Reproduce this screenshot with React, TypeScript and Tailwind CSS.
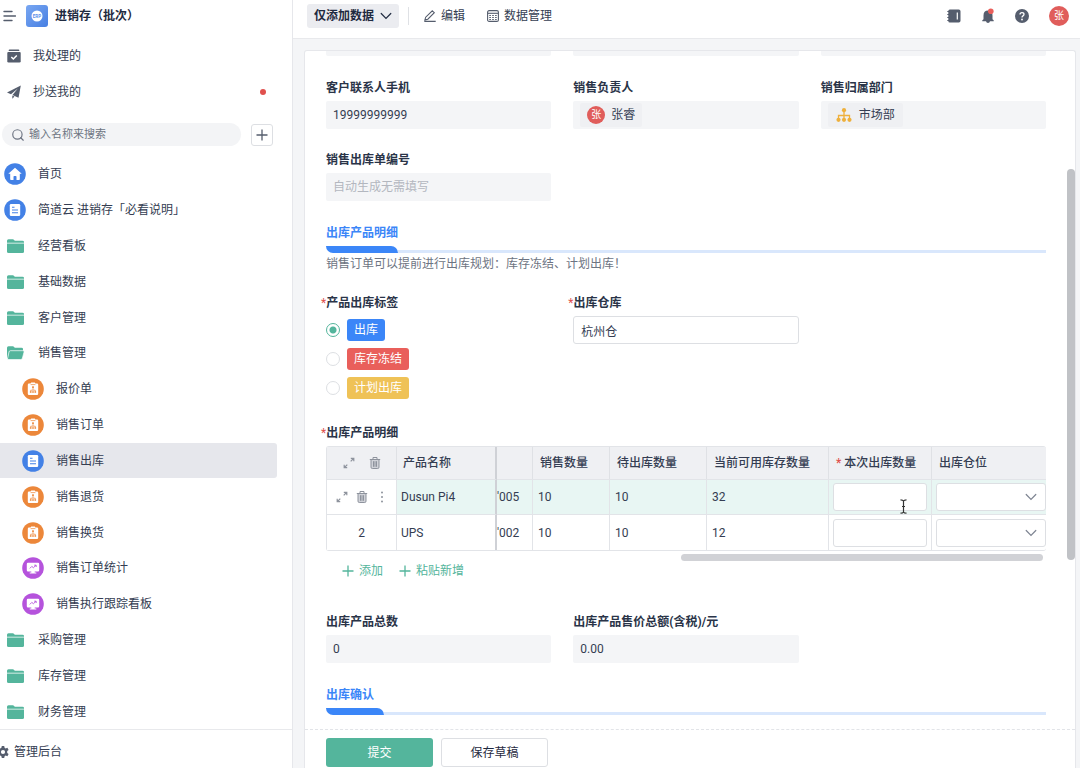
import { useState } from "react";
import type { ReactNode } from "react";
import { Search } from "lucide-react";

type IconKind = "home" | "doc" | "folder" | "folderOpen" | "form" | "board";

type NavItem = {
  label: string;
  icon: IconKind;
  child?: boolean;
};

const navItems: NavItem[] = [
  { label: "首页", icon: "home" },
  { label: "简道云 进销存「必看说明」", icon: "doc" },
  { label: "经营看板", icon: "folder" },
  { label: "基础数据", icon: "folder" },
  { label: "客户管理", icon: "folder" },
  { label: "销售管理", icon: "folderOpen" },
  { label: "报价单", icon: "form", child: true },
  { label: "销售订单", icon: "form", child: true },
  { label: "销售出库", icon: "doc", child: true },
  { label: "销售退货", icon: "form", child: true },
  { label: "销售换货", icon: "form", child: true },
  { label: "销售订单统计", icon: "board", child: true },
  { label: "销售执行跟踪看板", icon: "board", child: true },
  { label: "采购管理", icon: "folder" },
  { label: "库存管理", icon: "folder" },
  { label: "财务管理", icon: "folder" },
];

const tags = [
  { label: "出库", color: "bg-[#3b86f8]" },
  { label: "库存冻结", color: "bg-[#e95f5b]" },
  { label: "计划出库", color: "bg-[#efc257]" },
];

const rows = [
  { name: "Dusun Pi4", code: "'005", sold: 10, pending: 10, stock: 32 },
  { name: "UPS", code: "'002", sold: 10, pending: 10, stock: 12 },
];

function NavIcon({ kind }: { kind: IconKind }) {
  if (kind === "folder") {
    return (
      <svg width="22" height="22" viewBox="0 0 22 22" fill="#54b59c">
        <path d="M3 5.800q0-1.500 1.500-1.500h4.300q.8 0 1.300.6l.7.800h7.700q1.500 0 1.500 1.400v.6H3z" />
        <path d="M3 8.500h17v8q0 1.600-1.500 1.600h-14Q3 18.100 3 16.500z" />
      </svg>
    );
  }
  if (kind === "folderOpen") {
    return (
      <svg width="22" height="22" viewBox="0 0 22 22">
        <path d="M3 5.800q0-1.500 1.500-1.500h4.300q.8 0 1.300.6l.7.800h6.700q1.500 0 1.500 1.400v2H6.500L3.600 16H3z" fill="#54b59c" />
        <path d="M6.400 8.700h12.800q1.200 0 .9 1.200l-1.700 6.300q-.4 1.400-1.800 1.400H4.800q-1.600 0-1.200-1.300l1.400-6.400q.3-1.200 1.400-1.200z" fill="#54b59c" stroke="#fff" strokeWidth=".7" />
      </svg>
    );
  }
  if (kind === "home") {
    return (
      <svg width="22" height="22" viewBox="0 0 22 22">
        <circle cx="11" cy="11" r="10.800" fill="#4381e6" />
        <path d="M11 4.800l6.700 6h-1.900v5.400q0 .8-.8.8h-2.500v-3.200q0-.8-.8-.8h-1.400q-.8 0-.8.8V17H7q-.8 0-.8-.8v-5.400H4.300z" fill="#fff" />
      </svg>
    );
  }
  if (kind === "doc") {
    return (
      <svg width="22" height="22" viewBox="0 0 22 22">
        <circle cx="11" cy="11" r="10.800" fill="#4381e6" />
        <rect x="5.800" y="5" width="10.400" height="12" rx="1.200" fill="#fff" />
        <path d="M8 8.300h2.500M8 11h6M8 13.700h6" stroke="#4381e6" strokeWidth="1.100" />
      </svg>
    );
  }
  if (kind === "form") {
    return (
      <svg width="22" height="22" viewBox="0 0 22 22">
        <circle cx="11" cy="11" r="10.800" fill="#ec873a" />
        <path d="M7 5.500h1.600l.6-.9h3.600l.6.900H15q1.200 0 1.200 1.200v9.100q0 1.200-1.200 1.200H7q-1.200 0-1.200-1.200V6.700Q5.800 5.500 7 5.500z" fill="#fff" />
        <path d="M8.600 6.600h4.800M11 9v3M8.700 13.600v-1.400h4.600v1.400" fill="none" stroke="#ec873a" strokeWidth=".7" />
        <path d="M10.200 8.300h1.600v1.600h-1.600zM7.900 13.200h1.600v1.500H7.900zM10.200 13.200h1.600v1.500h-1.600zM12.500 13.200h1.600v1.500h-1.600z" fill="#ec873a" />
      </svg>
    );
  }
  return (
    <svg width="22" height="22" viewBox="0 0 22 22">
      <circle cx="11" cy="11" r="10.800" fill="#b553dc" />
      <path d="M6 5.800h10q1.200 0 1.200 1.200v6.200q0 1.200-1.200 1.200h-3.300v1h1.600v1.200H7.700v-1.200h1.600v-1H6q-1.200 0-1.200-1.200V7Q4.800 5.800 6 5.800z" fill="#fff" />
      <path d="M7.800 11.400l2-2 1.600 1.300L14 8.300M12.200 8.200h2v1.800" fill="none" stroke="#b553dc" strokeWidth=".9" />
    </svg>
  );
}

function ChevronIcon({ className = "" }: { className?: string }) {
  return (
    <svg width="12" height="8" viewBox="0 0 12 8" fill="none" stroke="currentColor" strokeWidth="1.200" strokeLinecap="round" className={className}>
      <path d="M1.200 1.500L6 6.300l4.800-4.800" />
    </svg>
  );
}

function PlusIcon() {
  return (
    <svg width="12" height="12" viewBox="0 0 12 12" stroke="currentColor" strokeWidth="1.300">
      <path d="M.5 6h11M6 .5v11" />
    </svg>
  );
}

function ExpandIcon() {
  return (
    <svg width="12" height="12" viewBox="0 0 12 12" fill="none" stroke="#8e939d" strokeWidth="1.200">
      <path d="M7.800 1.300h3v3M10.500 1.500L7.700 4.300M1.500 10.500l2.800-2.800M4.200 10.700h-3v-3" />
    </svg>
  );
}

function TrashIcon() {
  return (
    <svg width="12" height="14" viewBox="0 0 12 14" fill="none" stroke="#8e939d" strokeWidth="1">
      <path d="M2 3.500h8v7.700q0 1.300-1.300 1.300H3.300Q2 12.500 2 11.200z" fill="#d0d2d8" />
      <path d="M.8 3.500h10.400M4 3.300V1.500h4v1.800M4.500 5.200v5.600M6 5.200v5.600M7.500 5.200v5.600" />
    </svg>
  );
}

function Sidebar() {
  const [active, setActive] = useState("销售出库");

  return (
    <aside className="flex w-[293px] shrink-0 flex-col border-r border-[#e6e7eb] bg-white text-[#343d52]">
      <div className="flex h-8 items-center gap-[10px] pl-[3px]">
        <button aria-label="菜单" className="text-[#555d6d]">
          <svg width="13" height="12" viewBox="0 0 13 12" stroke="currentColor" strokeWidth="1.400" strokeLinecap="round">
            <path d="M1 1.500h8M1 6h11.500M1 10.500h8" />
          </svg>
        </button>
        <div className="flex items-center gap-[7px]">
          <svg width="22" height="22" viewBox="0 0 22 22" aria-hidden="true">
            <defs>
              <linearGradient id="logo" x1="0" y1="0" x2="1" y2="1">
                <stop offset="0" stopColor="#79a7f2" />
                <stop offset="1" stopColor="#477fe2" />
              </linearGradient>
            </defs>
            <rect width="22" height="22" rx="3" fill="url(#logo)" />
            <circle cx="11" cy="11" r="5.500" fill="#fff" />
            <text x="11" y="12.800" fontSize="4.500" fontWeight="700" textAnchor="middle" fill="#5c90ea">ERP</text>
          </svg>
          <h1 className="text-xs font-bold text-[#1f2a40]">进销存（批次）</h1>
        </div>
      </div>

      <div className="mt-[6px] pr-[26px]">
        <a href="#todo" className="flex h-9 items-center gap-3 pl-[7px]">
          <svg width="14" height="14" viewBox="0 0 14 14">
            <path d="M2.500.5h9q.8 0 .8 1v.6H1.700v-.6q0-1 .8-1z" fill="#555d6d" />
            <path d="M1.300 3h11.400q1 0 1 1v8.200q0 1.300-1.300 1.300H1.600Q.3 13.500.3 12.200V4q0-1 1-1z" fill="#555d6d" />
            <path d="M4.300 8l2 2 3.500-3.600" fill="none" stroke="#fff" strokeWidth="1.500" />
          </svg>
          <span className="text-xs">我处理的</span>
        </a>
        <a href="#cc" className="flex h-9 items-center gap-3 pl-[7px]">
          <svg width="14" height="14" viewBox="0 0 14 14" fill="#555d6d">
            <path d="M13.800.4L0 7.400l4 1.900L10.800 3.500 5.500 9.900v.1l6 2.800zM5.300 10.500v3.300l2.200-2.300z" />
          </svg>
          <span className="flex-1 text-xs">抄送我的</span>
          <span className="size-[6px] rounded-full bg-[#e0504d]" />
        </a>
      </div>

      <div className="mt-[13px] flex items-center gap-[10px] pr-[19px] pl-[2px]">
        <label className="flex h-[23px] flex-1 items-center gap-1 rounded-full bg-[#f3f4f6] pl-[9px]">
          <Search size={14} strokeWidth={2} className="text-[#6d7482]" />
          <input
            aria-label="搜索"
            placeholder="输入名称来搜索"
            className="h-[23px] min-w-0 flex-1 bg-transparent text-[11px] leading-[23px] outline-none placeholder:text-[#6d7482]"
          />
        </label>
        <button aria-label="新建" className="flex size-[22px] items-center justify-center rounded-[3px] border border-[#dddfe3] text-[#555d6d]">
          <PlusIcon />
        </button>
      </div>

      <nav className="mt-[10px] flex min-h-0 flex-1 flex-col pr-[15px]">
        {navItems.map((item) => (
          <a
            key={item.label}
            href={`#${item.label}`}
            onClick={() => setActive(item.label)}
            className={`flex min-h-0 flex-1 items-center gap-3 rounded-r-[3px] pt-px text-xs ${item.child ? "pl-[22px]" : "pl-1"} ${
              active === item.label ? "bg-[#e6e7ec]" : ""
            }`}
          >
            <NavIcon kind={item.icon} />
            {item.label}
          </a>
        ))}
      </nav>

      <div className="h-[39px] border-t border-[#e8e9ec] pt-[13px]">
        <a href="#admin" className="flex items-center gap-1 text-xs leading-[18px]">
          <svg width="10" height="14" viewBox="4 0 10 14">
            <path
              d="M5.800 1h2.400l.4 1.800 1 .6 1.800-.6 1.200 2.100-1.400 1.200v1.800l1.400 1.200-1.200 2.100-1.800-.6-1 .6-.4 1.800H5.800l-.4-1.800-1-.6-1.800.6-1.200-2.100 1.400-1.200V6.100L1.400 4.900l1.200-2.100 1.800.6 1-.6zM7 4.900a2.100 2.100 0 1 0 0 4.200 2.100 2.100 0 0 0 0-4.200z"
              fill="#555d6d"
              fillRule="evenodd"
            />
          </svg>
          管理后台
        </a>
      </div>
    </aside>
  );
}

function TopBar() {
  return (
    <header className="flex h-[39px] shrink-0 items-start border-b border-[#e8e9ec] bg-white pt-1 pr-[11px] pl-[14px] text-xs text-[#343d52]">
      <div className="flex h-6 flex-1 items-center">
        <button className="flex h-6 items-center gap-[6px] rounded-[3px] bg-[#ebecf0] px-[7px] font-bold text-[#1f2a40]">
          仅添加数据
          <ChevronIcon />
        </button>
        <span className="ml-[9px] h-[18px] w-px bg-[#dfe1e5]" />
        <button className="ml-[15px] flex items-center gap-[5px]">
          <svg width="12" height="12" viewBox="0 0 12 12" fill="none" stroke="#555d6d" strokeWidth="1.100">
            <path d="M8.300.8l2 1.900-6.500 6.500-2.900.700.800-2.700zM.3 11.400h11.400" />
          </svg>
          编辑
        </button>
        <button className="ml-[22px] flex items-center gap-[5px]">
          <svg width="12" height="12" viewBox="0 0 12 12" fill="none" stroke="#555d6d" strokeWidth="1.100">
            <rect x=".6" y=".6" width="10.800" height="10.800" rx="1.500" />
            <path d="M.6 3.300h10.800" />
            <path d="M2.300 5.500h1.600M5.200 5.500h1.600M8.100 5.500h1.600M2.300 7.500h1.600M5.200 7.500h1.600M8.100 7.500h1.600M2.300 9.500h1.600M5.200 9.500h1.600M8.100 9.500h1.600" />
          </svg>
          数据管理
        </button>
      </div>
      <div className="flex h-6 items-center gap-5 text-[#555d6d]">
        <button aria-label="通讯录">
          <svg width="14" height="14" viewBox="0 0 14 14" fill="currentColor">
            <path d="M2.800.5h9q1.700 0 1.700 1.700v9.600q0 1.700-1.700 1.700h-9q-1.500 0-1.500-1.500H.3v-1h1V9H.3V8h1V6H.3V5h1V3H.3V2h1q0-1.500 1.500-1.500zM9.700 3.500v7h1.200v-7z" fillRule="evenodd" />
          </svg>
        </button>
        <button aria-label="消息">
          <svg width="14" height="16" viewBox="0 0 14 16">
            <path d="M7 2.500q4.500 0 4.500 5v3.800l1.200 1v1H9q-.3 1.700-2 1.700t-2-1.700H1.300v-1l1.200-1V7.500q0-5 4.500-5z" fill="currentColor" />
            <circle cx="9.800" cy="3.200" r="2.800" fill="#e95f5b" />
          </svg>
        </button>
        <button aria-label="帮助">
          <svg width="14" height="14" viewBox="0 0 14 14">
            <circle cx="7" cy="7" r="7" fill="currentColor" />
            <path d="M5 5.600q0-2 2-2t2 1.700q0 1-1 1.600-1 .6-1 1.500" fill="none" stroke="#fff" strokeWidth="1.300" />
            <circle cx="7" cy="10.500" r=".9" fill="#fff" />
          </svg>
        </button>
        <button className="size-5 rounded-full bg-[#e05d5b] text-[10px] leading-5 text-white">张</button>
      </div>
    </header>
  );
}

function Field({ id, label, required, children }: { id: string; label: string; required?: boolean; children: ReactNode }) {
  return (
    <div className="flex flex-col items-stretch gap-1">
      <label htmlFor={id} className={`self-start text-xs leading-[18px] font-bold text-[#2a3448] ${required ? "-ml-[5px]" : ""}`}>
        {required && <span className="font-normal text-[#e0504d]">*</span>}
        {label}
      </label>
      {children}
    </div>
  );
}

function ReadonlyInput({ id, value, placeholder }: { id: string; value?: string; placeholder?: string }) {
  return (
    <input
      id={id}
      readOnly
      value={value ?? ""}
      placeholder={placeholder}
      className="h-7 w-full rounded-[2px] bg-[#f4f5f7] px-[7px] text-xs text-[#343d52] outline-none placeholder:text-[#b3b7bf]"
    />
  );
}

function SectionTitle({ children }: { children: ReactNode }) {
  return (
    <div className="grid grid-cols-[auto_1fr] items-end gap-y-1">
      <h2 className="text-xs leading-[18px] font-bold text-[#3b86f8]">{children}</h2>
      <span />
      <span className="h-[7px] min-w-[58px] rounded-tr-[7px] rounded-bl-[7px] bg-[#3b86f8]" />
      <span className="h-[3px] bg-[#d9e7fc]" />
    </div>
  );
}

function DetailTable() {
  const th = "border-r border-[#dfe1e5] pl-[7px] text-left font-medium";
  const td = "border-t border-r border-[#e2e4e8] pl-[5px]";

  return (
    <div className="rounded-[3px] border border-r-0 border-[#e2e4e8]">
      <table className="w-full table-fixed border-separate border-spacing-0 text-xs text-[#343d52]">
        <colgroup>
          <col className="w-[70px]" />
          <col className="w-[100px]" />
          <col className="w-[36px]" />
          <col className="w-[77px]" />
          <col className="w-[97px]" />
          <col className="w-[122px]" />
          <col className="w-[103px]" />
          <col />
        </colgroup>
        <thead>
          <tr className="h-8 bg-[#eff0f3]">
            <th className="border-r border-[#dfe1e5]">
              <div className="flex items-center justify-center gap-[14px]">
                <button aria-label="展开" className="block"><ExpandIcon /></button>
                <button aria-label="删除全部" className="block"><TrashIcon /></button>
              </div>
            </th>
            <th className="border-r-2 border-[#cfd1d6] pl-[6px] text-left font-medium">产品名称</th>
            <th className="border-r border-[#dfe1e5]"></th>
            <th className={th}>销售数量</th>
            <th className={th}>待出库数量</th>
            <th className={th}>当前可用库存数量</th>
            <th className={th}>
              <span className="text-[#e0504d]">*</span> 本次出库数量
            </th>
            <th className="pl-[7px] text-left font-medium">出库仓位</th>
          </tr>
        </thead>
        <tbody>
          {rows.map((row, i) => (
            <tr key={row.name} className={i === 0 ? "h-[35px] bg-[#e8f6f3]" : "h-9"}>
              <td className="border-t border-r border-[#e2e4e8] bg-white text-center">
                {i === 0 ? (
                  <div className="flex items-center justify-center gap-[8px]">
                    <button aria-label="展开行" className="block"><ExpandIcon /></button>
                    <button aria-label="删除行" className="block"><TrashIcon /></button>
                    <button aria-label="更多" className="block">
                      <svg width="12" height="12" viewBox="0 0 12 12" fill="#8e939d">
                        <circle cx="6" cy="1.500" r="1" />
                        <circle cx="6" cy="6" r="1" />
                        <circle cx="6" cy="10.500" r="1" />
                      </svg>
                    </button>
                  </div>
                ) : (
                  i + 1
                )}
              </td>
              <td className="border-t border-r-2 border-t-[#e2e4e8] border-r-[#cfd1d6] pl-1">{row.name}</td>
              <td className="border-t border-r border-[#e2e4e8]">{row.code}</td>
              <td className={td}>{row.sold}</td>
              <td className={td}>{row.pending}</td>
              <td className={td}>{row.stock}</td>
              <td className="relative border-t border-r border-[#e2e4e8] px-1">
                <input
                  aria-label={`${row.name} 本次出库数量`}
                  className="block h-7 w-full rounded-[3px] border border-[#dddfe3] bg-white px-2 outline-none"
                />
                {i === 0 && (
                  <svg className="absolute right-[24px] bottom-0" width="7" height="15" viewBox="0 0 7 15" fill="none" stroke="#333" strokeWidth="1.200">
                    <path d="M.5.800q2.400 0 3 1.200.6-1.200 3-1.200M3.500 2v11M.5 14.200q2.400 0 3-1.200.6 1.200 3 1.200M2 7.500h3" />
                  </svg>
                )}
              </td>
              <td className="border-t border-[#e2e4e8] pl-1">
                <div className="relative">
                  <select
                    aria-label={`${row.name} 出库仓位`}
                    className="block h-7 w-full appearance-none rounded-[3px] border border-[#dddfe3] bg-white px-2 outline-none"
                  >
                    <option value=""></option>
                  </select>
                  <ChevronIcon className="pointer-events-none absolute top-[10px] right-[9px] text-[#7d8391]" />
                </div>
              </td>
            </tr>
          ))}
        </tbody>
      </table>
    </div>
  );
}

function OutboundForm() {
  const [tag, setTag] = useState("出库");
  const [warehouse, setWarehouse] = useState("杭州仓");

  return (
    <div className="relative min-h-0 flex-1 overflow-hidden pr-[29px] pl-[21px]">
      <div className="grid grid-cols-3 gap-[22px]">
        <div className="h-[5px] rounded-b-[2px] bg-[#f4f5f7]" />
        <div className="h-[5px] rounded-b-[2px] bg-[#f4f5f7]" />
        <div className="h-[5px] rounded-b-[2px] bg-[#f4f5f7]" />
      </div>

      <div className="mt-[23px] grid grid-cols-3 gap-x-[22px] gap-y-[22px]">
        <Field id="phone" label="客户联系人手机">
          <ReadonlyInput id="phone" value="19999999999" />
        </Field>
        <Field id="owner" label="销售负责人">
          <div id="owner" className="flex h-7 items-center rounded-[2px] bg-[#f4f5f7] px-[7px] text-xs text-[#343d52]">
            <span className="flex h-6 items-center gap-[6px] rounded-[2px] bg-[#eff0f3] px-[7px]">
              <span className="size-[18px] rounded-full bg-[#e05d5b] text-center text-[10px] leading-[18px] text-white">张</span>
              张睿
            </span>
          </div>
        </Field>
        <Field id="dept" label="销售归属部门">
          <div id="dept" className="flex h-7 items-center rounded-[2px] bg-[#f4f5f7] px-[7px] text-xs text-[#343d52]">
            <span className="flex h-6 items-center gap-[7px] rounded-[2px] bg-[#eff0f3] px-2">
              <svg width="16" height="14" viewBox="0 0 16 14">
                <path d="M8 2v10M2.500 12V7.500h11V12" fill="none" stroke="#eeb03d" strokeWidth="1.300" />
                <g fill="#eeb03d">
                  <circle cx="8" cy="2.200" r="2.100" />
                  <circle cx="2.500" cy="11.800" r="2.100" />
                  <circle cx="8" cy="11.800" r="2.100" />
                  <circle cx="13.500" cy="11.800" r="2.100" />
                </g>
              </svg>
              市场部
            </span>
          </div>
        </Field>
        <Field id="orderNo" label="销售出库单编号">
          <ReadonlyInput id="orderNo" placeholder="自动生成无需填写" />
        </Field>
      </div>

      <div className="mt-[23px]">
        <SectionTitle>出库产品明细</SectionTitle>
        <p className="mt-[2px] text-xs leading-[18px] text-[#6d7482]">销售订单可以提前进行出库规划：库存冻结、计划出库！</p>
      </div>

      <div className="mt-[21px] grid grid-cols-3 gap-[22px]">
        <fieldset>
          <legend className="-ml-[5px] text-xs leading-[18px] font-bold text-[#2a3448]">
            <span className="font-normal text-[#e0504d]">*</span>产品出库标签
          </legend>
          <div className="flex flex-col gap-[7px] pt-[7px]">
            {tags.map((t) => (
              <label key={t.label} className="flex h-[22px] items-center gap-[7px]">
                <input
                  type="radio"
                  name="tag"
                  checked={tag === t.label}
                  onChange={() => setTag(t.label)}
                  className="size-[14px] appearance-none rounded-full border border-[#dddfe3] bg-white checked:border-[#54b59c] checked:bg-[radial-gradient(circle,#54b59c_0_3px,white_4px)]"
                />
                <span className={`rounded-[3px] px-[7px] text-xs leading-[22px] text-white ${t.color}`}>{t.label}</span>
              </label>
            ))}
          </div>
        </fieldset>
        <Field id="warehouse" label="出库仓库" required>
          <input
            id="warehouse"
            value={warehouse}
            onChange={(e) => setWarehouse(e.target.value)}
            className="h-7 w-full rounded-[3px] border border-[#dddfe3] bg-white px-[7px] text-xs text-[#343d52] outline-none"
          />
        </Field>
      </div>

      <div className="mt-[25px] flex flex-col gap-1">
        <h3 className="-ml-[5px] text-xs leading-[18px] font-bold text-[#2a3448]">
          <span className="font-normal text-[#e0504d]">*</span>出库产品明细
        </h3>
        <DetailTable />
      </div>
      <div className="mt-[3px] flex justify-end pr-[3px]">
        <div className="h-[7px] w-[362px] rounded-full bg-[#d1d2d6]" />
      </div>

      <div className="mt-px flex gap-4 pl-4 text-xs leading-[18px] text-[#54b59c]">
        <button className="flex items-center gap-[5px]">
          <PlusIcon />
          添加
        </button>
        <button className="flex items-center gap-[5px]">
          <PlusIcon />
          粘贴新增
        </button>
      </div>

      <div className="mt-[33px] grid grid-cols-3 gap-[22px]">
        <Field id="total" label="出库产品总数">
          <ReadonlyInput id="total" value="0" />
        </Field>
        <Field id="amount" label="出库产品售价总额(含税)/元">
          <ReadonlyInput id="amount" value="0.00" />
        </Field>
      </div>

      <div className="mt-[23px]">
        <SectionTitle>出库确认</SectionTitle>
      </div>

      {/* scroll thumb */}
      <div className="absolute top-[118px] right-0 h-[391px] w-2 rounded-full bg-[#c0c2c6]" />
    </div>
  );
}

export default function App() {
  return (
    <div lang="zh-CN" className="flex h-screen overflow-hidden bg-[#f4f5f7] font-['Roboto','Noto_Sans_CJK_SC',sans-serif]">
      <Sidebar />
      <div className="flex min-w-0 flex-1 flex-col">
        <TopBar />
        <main className="mt-[11px] mr-1 ml-[11px] flex min-h-0 flex-1 flex-col rounded-t-[3px] border border-b-0 border-[#e6e7eb] bg-white">
          <OutboundForm />
          <footer className="flex h-[39px] shrink-0 gap-2 border-t border-dashed border-[#e2e4e8] pt-2 pl-[21px] text-xs">
            <button className="h-[29px] w-[107px] rounded-[3px] bg-[#54b59c] text-white">提交</button>
            <button className="h-[29px] w-[107px] rounded-[3px] border border-[#dddfe3] bg-white text-[#1f2a40]">保存草稿</button>
          </footer>
        </main>
      </div>
    </div>
  );
}
